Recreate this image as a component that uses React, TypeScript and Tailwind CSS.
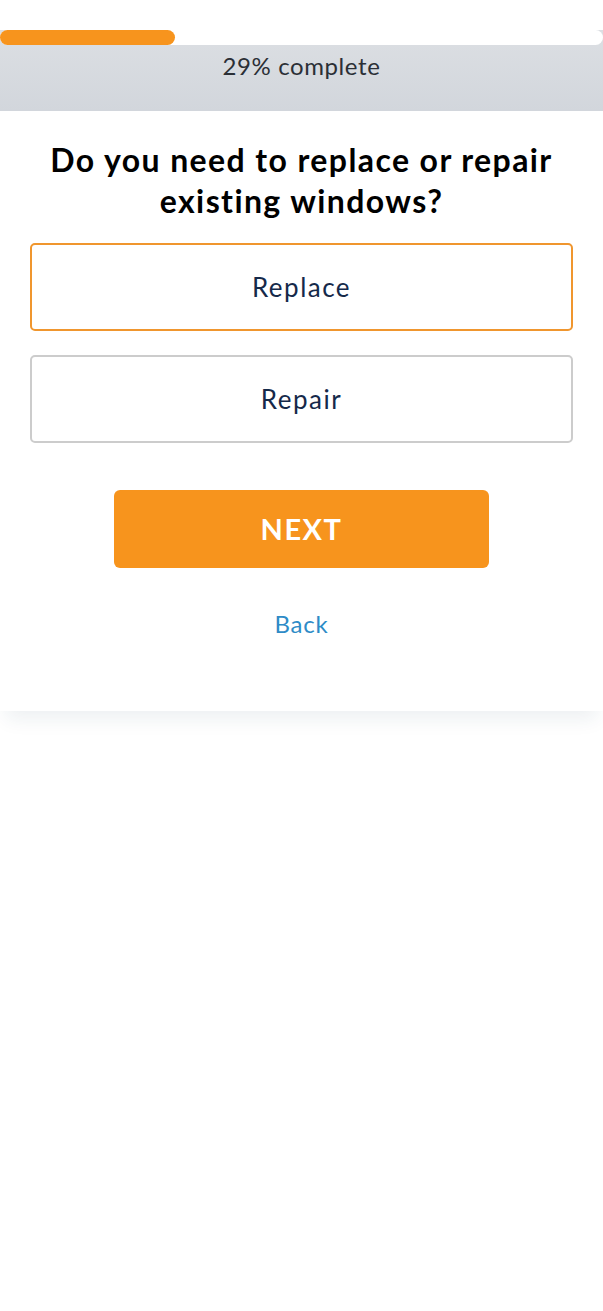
import React from "react";

const options = ["Replace", "Repair"];

export default function App() {
  const progress = 29;
  const selected = "Replace";

  return (
    <div className="min-h-[1311px] bg-white font-['Lato',sans-serif]">
      <div className="h-[30px] bg-white" />

      {/* Progress header */}
      <div className="bg-gradient-to-b from-[#dcdfe3] to-[#d2d6dc]">
        <div className="h-[15px] w-full rounded-full bg-white">
          <div
            className="h-full rounded-full bg-[#f7941d]"
            style={{ width: `${progress}%` }}
          />
        </div>
        <div className="flex h-[66px] items-start justify-center pt-[3px] text-[24px] tracking-[0.6px] text-[#2b2f36]">
          {progress}% complete
        </div>
      </div>

      {/* Question card */}
      <div className="bg-white px-[30px] pt-[28px] pb-[69px] shadow-[0_14px_18px_-6px_rgba(30,60,90,0.08)]">
        <h1 className="text-center text-[32px] font-bold leading-[41px] tracking-[1.4px] text-black">
          Do you need to replace or repair existing windows?
        </h1>

        <div className="mt-[22px] flex flex-col gap-[24px]">
          {options.map((opt) => (
            <button
              key={opt}
              className={`flex h-[88px] items-center justify-center rounded-[5px] border-2 bg-white text-[26px] tracking-[1.5px] text-[#15294a] ${
                opt === selected ? "border-[#f0962e]" : "border-[#cccccc]"
              }`}
            >
              {opt}
            </button>
          ))}
        </div>

        <div className="mt-[47px] flex justify-center">
          <button className="h-[78px] w-[375px] rounded-[6px] bg-[#f7941d] text-[29px] font-bold tracking-[1.5px] text-white">
            NEXT
          </button>
        </div>

        <div className="mt-[38px] text-center text-[24px] tracking-[0.8px] text-[#2e8bc7]">
          Back
        </div>
      </div>
    </div>
  );
}
